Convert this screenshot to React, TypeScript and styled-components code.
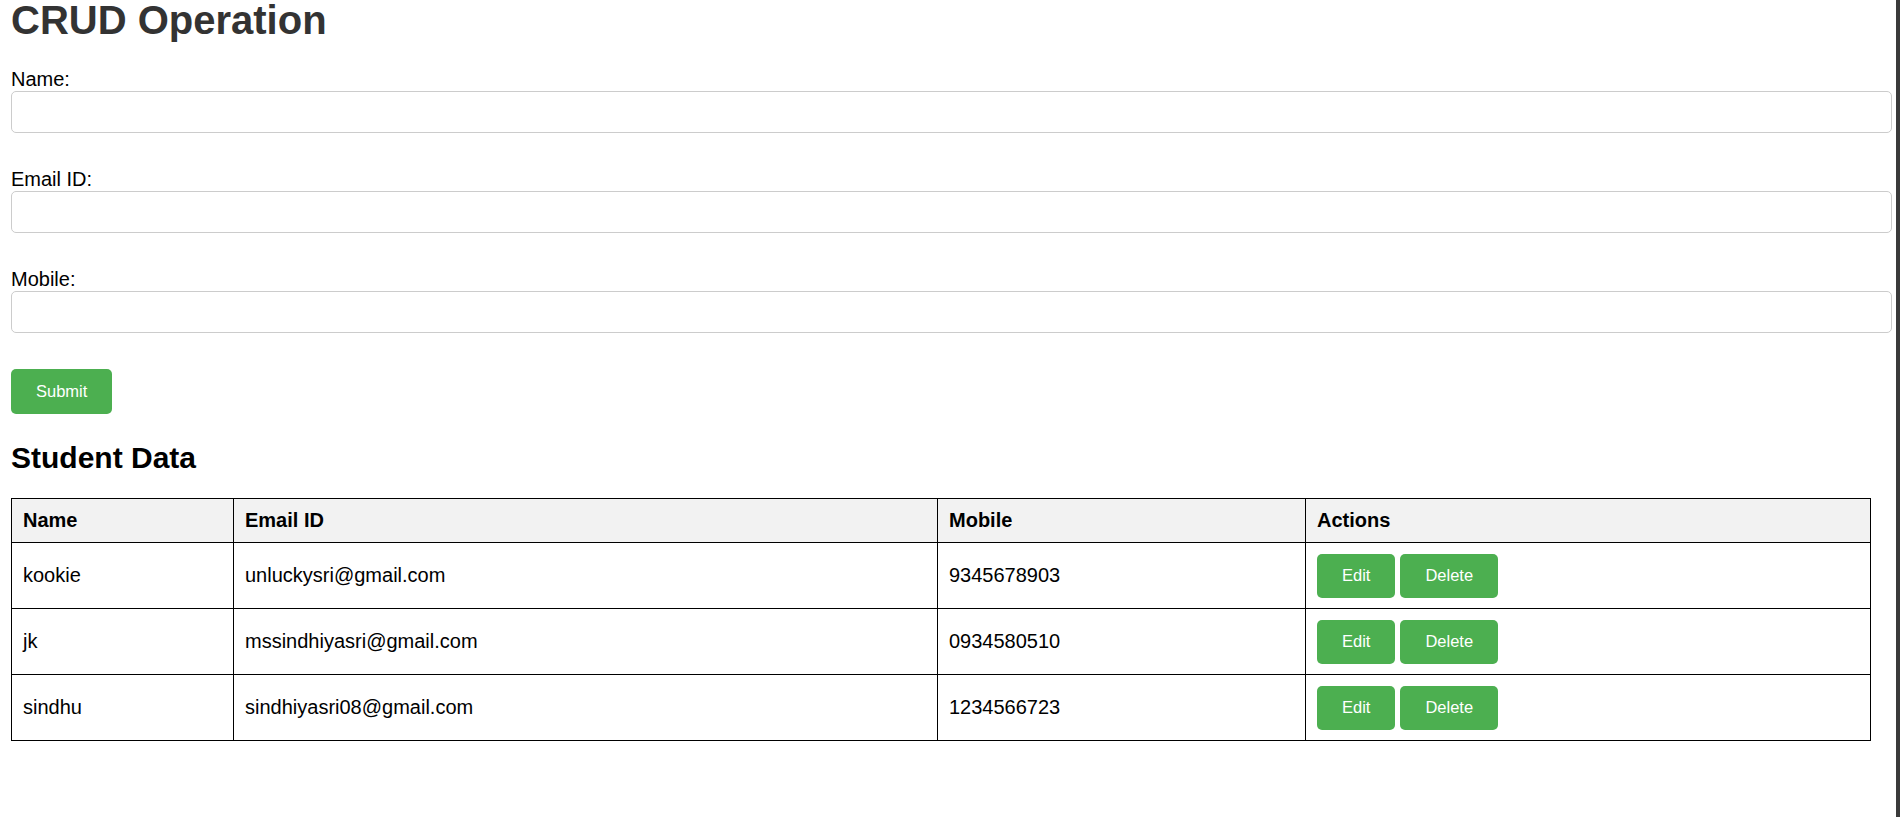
import styled, { createGlobalStyle } from "styled-components";

type Student = {
  name: string;
  email: string;
  mobile: string;
};

const students: Student[] = [
  { name: "kookie", email: "unluckysri@gmail.com", mobile: "9345678903" },
  { name: "jk", email: "mssindhiyasri@gmail.com", mobile: "0934580510" },
  { name: "sindhu", email: "sindhiyasri08@gmail.com", mobile: "1234566723" },
];

const columns = [
  { label: "Name", width: 222 },
  { label: "Email ID", width: 704 },
  { label: "Mobile", width: 368 },
  { label: "Actions", width: 565 },
];

const fields = ["Name:", "Email ID:", "Mobile:"];

export default function App() {
  return (
    <>
      <GlobalStyle />
      <Page>
        <Title>CRUD Operation</Title>
        <form onSubmit={(e) => e.preventDefault()}>
          {fields.map((label) => (
            <FormGroup key={label}>
              <Label>{label}</Label>
              <TextInput type="text" />
            </FormGroup>
          ))}
          <SubmitButton type="submit">Submit</SubmitButton>
        </form>

        <SectionTitle>Student Data</SectionTitle>
        <DataTable>
          <colgroup>
            {columns.map((c) => (
              <Col key={c.label} $w={c.width} />
            ))}
          </colgroup>
          <thead>
            <tr>
              {columns.map((c) => (
                <HeadCell key={c.label}>{c.label}</HeadCell>
              ))}
            </tr>
          </thead>
          <tbody>
            {students.map((s) => (
              <tr key={s.email}>
                <Cell>{s.name}</Cell>
                <Cell>{s.email}</Cell>
                <Cell>{s.mobile}</Cell>
                <Cell>
                  <Actions>
                    <GreenButton type="button">Edit</GreenButton>
                    <GreenButton type="button">Delete</GreenButton>
                  </Actions>
                </Cell>
              </tr>
            ))}
          </tbody>
        </DataTable>
      </Page>
      <WindowEdge />
    </>
  );
}

const GlobalStyle = createGlobalStyle`
  body {
    margin: 0;
    background: #ffffff;
    font-family: "Liberation Sans", Arial, sans-serif;
    color: #000000;
  }
`;

const Page = styled.div`
  width: 1859px;
  padding: 0 10px 0 11px;
`;

const Title = styled.h1`
  margin: 0 0 28px;
  font-size: 40px;
  line-height: 40px;
  font-weight: bold;
  color: #333333;
`;

const FormGroup = styled.div`
  margin-bottom: 35px;
`;

const Label = styled.label`
  display: block;
  margin-bottom: 1px;
  font-size: 20px;
  line-height: 22px;
`;

const TextInput = styled.input`
  display: block;
  width: 100%;
  height: 20px;
  padding: 10px;
  margin: 0;
  border: 1px solid #cccccc;
  border-radius: 5px;
  font-family: inherit;
  font-size: 17px;
  line-height: 20px;
  box-sizing: content-box;
  outline: none;
`;

const GreenButton = styled.button`
  height: 44px;
  padding: 0 25px;
  margin: 0;
  border: none;
  border-radius: 5px;
  background: #4caf50;
  color: #ffffff;
  font-family: inherit;
  font-size: 16.5px;
  cursor: pointer;
`;

const SubmitButton = styled(GreenButton)`
  height: 45px;
  margin-top: 1px;
`;

const SectionTitle = styled.h2`
  margin: 27px 0 23px;
  font-size: 30px;
  line-height: 34px;
  font-weight: bold;
`;

const DataTable = styled.table`
  width: 100%;
  border-collapse: collapse;
  table-layout: fixed;
`;

const Col = styled.col<{ $w: number }>`
  width: ${(p) => p.$w}px;
`;

const HeadCell = styled.th`
  padding: 10px 11px;
  border: 1px solid #000000;
  background: #f2f2f2;
  text-align: left;
  font-size: 20px;
  line-height: 23px;
  font-weight: bold;
`;

const Cell = styled.td`
  padding: 10.5px 11px;
  border: 1px solid #000000;
  font-size: 20px;
  line-height: 23px;
  vertical-align: middle;
`;

const Actions = styled.div`
  display: flex;
  gap: 5px;
`;

const WindowEdge = styled.div`
  position: fixed;
  top: 0;
  right: 0;
  width: 4px;
  height: 100vh;
  background: #3a3a3a;
`;
